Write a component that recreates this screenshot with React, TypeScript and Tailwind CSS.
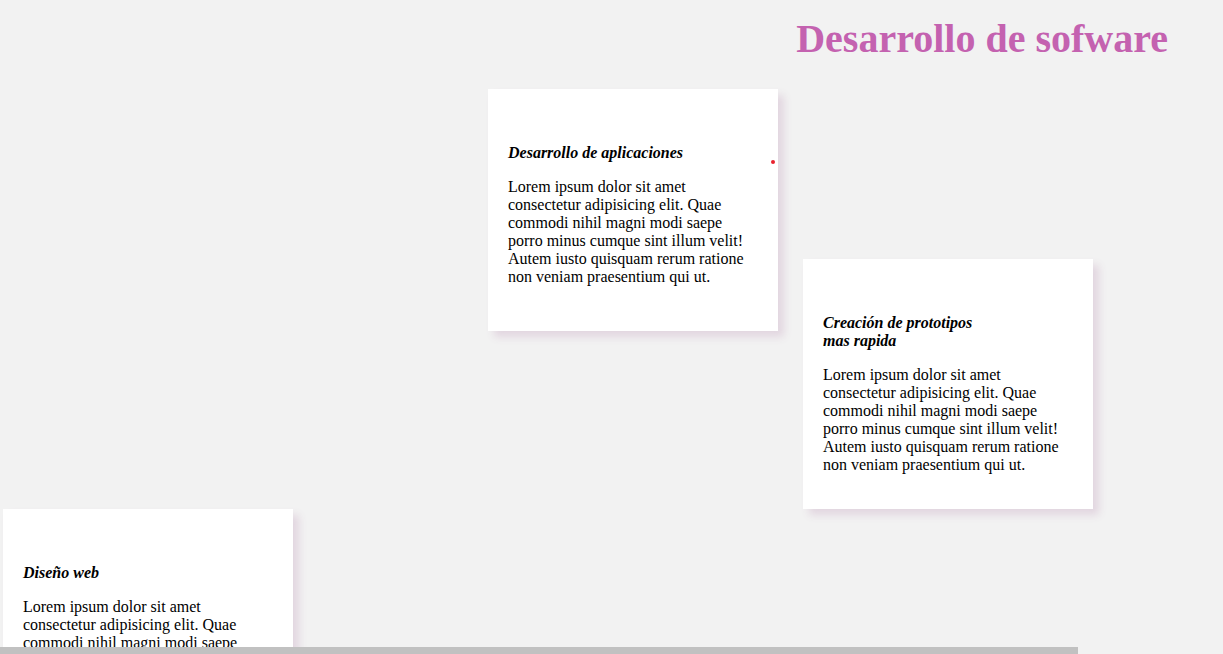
const BODY =
  "Lorem ipsum dolor sit amet consectetur adipisicing elit. Quae commodi nihil magni modi saepe porro minus cumque sint illum velit! Autem iusto quisquam rerum ratione non veniam praesentium qui ut.";

function Card({ title, className }: { title: React.ReactNode; className: string }) {
  return (
    <div
      className={`relative w-[290px] bg-white px-5 pt-[55px] shadow-[6px_6px_8px_#e2d6e0] ${className}`}
    >
      <h3 className="text-base font-bold italic leading-[18px]">{title}</h3>
      <p className="mt-4 text-base leading-[18px]">{BODY}</p>
    </div>
  );
}

export default function App() {
  return (
    <div
      className="relative h-[654px] overflow-hidden bg-[#f2f2f2] text-black"
      style={{ fontFamily: '"Liberation Serif", "Times New Roman", serif' }}
    >
      <h1 className="pt-[16px] pr-[55px] text-right text-[40px] font-bold leading-[46px] text-[#c462b0]">
        Desarrollo de sofware
      </h1>

      <div className="mt-[27px] flex flex-col">
        <div className="relative ml-[488px] w-[290px]">
          <Card title="Desarrollo de aplicaciones" className="h-[242px]" />
          <span className="absolute right-[3px] top-[71px] h-[4px] w-[4px] rounded-full bg-[#e8212e]" />
        </div>
        <Card
          title={
            <>
              Creación de prototipos
              <br />
              mas rapida
            </>
          }
          className="ml-[803px] -mt-[72px] h-[250px]"
        />
        <Card title="Diseño web" className="ml-[3px] h-[250px]" />
      </div>

      <div className="fixed bottom-0 left-0 h-[7px] w-[1078px] bg-[#c1c1c1]" />
    </div>
  );
}
